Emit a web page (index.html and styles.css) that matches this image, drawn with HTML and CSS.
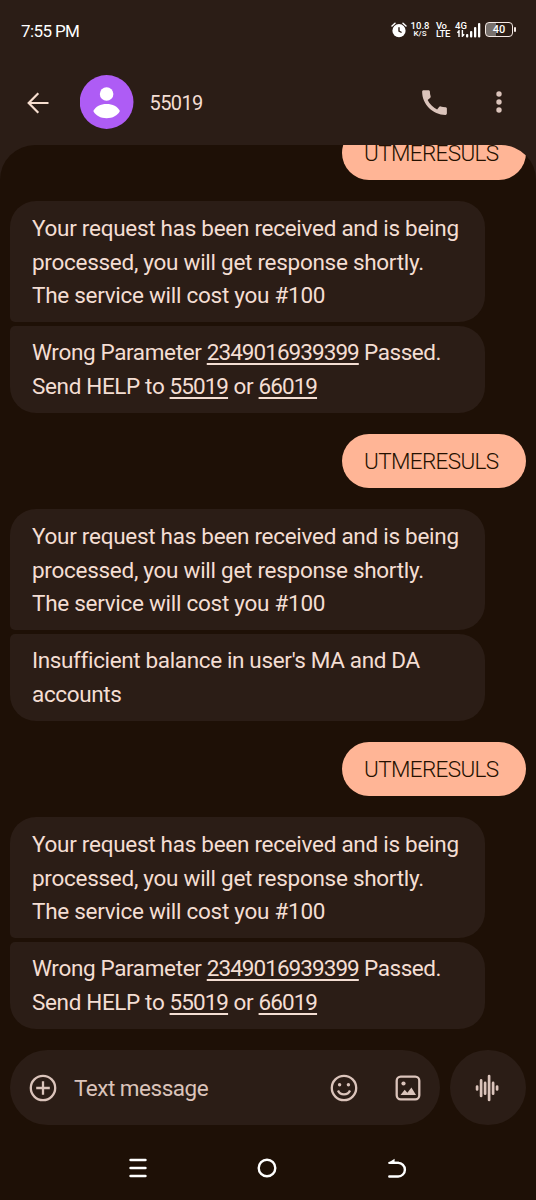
FILE: index.html
```html
<!DOCTYPE html>
<html lang="en">
<head>
<meta charset="utf-8">
<meta name="viewport" content="width=device-width">
<title>55019</title>
<link rel="stylesheet" href="styles.css">
</head>
<body>
<div class="phone">
  <div class="status">
    <span class="clock">7:55 PM</span>
    <div class="status-icons">
      <svg class="alarm" width="16" height="16" viewBox="0 0 16 16"><circle cx="8" cy="8.7" r="6.6" fill="#fff"/><path d="M1 4 4 1.3M15 4 12 1.3" stroke="#fff" stroke-width="1.5" stroke-linecap="round"/><path d="M8 5.2V9l2.6 1.5" fill="none" stroke="#2b1d16" stroke-width="1.4"/></svg>
      <div class="stack speed"><span>10.8</span><span class="unit">K/S</span></div>
      <div class="stack volte"><span>Vo</span><span>LTE</span></div>
      <div class="stack network"><span>4G</span><svg width="8" height="7" viewBox="0 0 8 7"><path d="M2 7V.8L.4 2.800M5.400 0v6.200l1.800-2" fill="none" stroke="#fff" stroke-width="1.400"/></svg></div>
      <svg class="signal" width="15" height="16" viewBox="0 0 15 16" fill="#fff"><rect x="0" y="12" width="2.300" height="3.500" rx="1"/><rect x="4" y="9" width="2.300" height="6.500" rx="1"/><rect x="8" y="5" width="2.300" height="10.500" rx="1"/><rect x="12" y="1" width="2.300" height="14.500" rx="1"/></svg>
      <div class="battery"><span>40</span></div><i class="battery-tip"></i>
    </div>
  </div>
  <header class="bar">
    <svg class="back" width="22" height="22" viewBox="0 0 22 22"><path d="M21.500 11H2M11.300 1.300 1.700 11l9.600 9.700" fill="none" stroke="#f7decf" stroke-width="2.200"/></svg>
    <svg class="avatar" width="54" height="54" viewBox="0 0 54 54"><circle cx="26.600" cy="27" r="26.900" fill="#ae5cf5"/><circle cx="26.600" cy="19" r="6.800" fill="#fff"/><path d="M13.300 36C15.600 31.500 20.600 29 26.600 29s11 2.500 13.300 7C37.600 40.600 32.600 43.200 26.600 43.200S15.600 40.600 13.300 36Z" fill="#fff"/></svg>
    <h1 class="name">55019</h1>
    <svg class="call" width="33" height="33" viewBox="0 0 24 24"><path d="M20.010 15.380c-1.230 0-2.420-.2-3.530-.56a.977.977 0 0 0-1.010.24l-1.570 1.970c-2.830-1.350-5.480-3.900-6.890-6.830l1.950-1.660c.27-.28.35-.67.24-1.020-.37-1.110-.56-2.300-.56-3.530 0-.54-.45-.99-.99-.99H4.190C3.650 3 3 3.240 3 3.990 3 13.280 10.730 21 20.010 21c.71 0 .99-.63.99-1.180v-3.450c0-.54-.45-.99-.99-.99z" fill="#dbc4bb"/></svg>
    <svg class="more" width="6" height="22" viewBox="0 0 6 22" fill="#dbc4bb"><circle cx="3" cy="3" r="2.700"/><circle cx="3" cy="11" r="2.700"/><circle cx="3" cy="19" r="2.700"/></svg>
  </header>
  <main class="thread">
    <p class="sent">UTMERESULS</p>
    <div class="group">
      <p class="received first">Your request has been received and is being<br>processed, you will get response shortly.<br>The service will cost you #100</p>
      <p class="received last"><span class="snug">Wrong Parameter </span><u>2349016939399</u> <span class="tight">Passed.</span><br><span class="snug">Send HELP to </span><u>55019</u> or <u>66019</u></p>
    </div>
    <p class="sent">UTMERESULS</p>
    <div class="group">
      <p class="received first">Your request has been received and is being<br>processed, you will get response shortly.<br>The service will cost you #100</p>
      <p class="received last snug">Insufficient balance in user's MA and DA<br>accounts</p>
    </div>
    <p class="sent">UTMERESULS</p>
    <div class="group">
      <p class="received first">Your request has been received and is being<br>processed, you will get response shortly.<br>The service will cost you #100</p>
      <p class="received last"><span class="snug">Wrong Parameter </span><u>2349016939399</u> <span class="tight">Passed.</span><br><span class="snug">Send HELP to </span><u>55019</u> or <u>66019</u></p>
    </div>
  </main>
  <div class="composer">
    <div class="field">
      <svg width="28" height="28" viewBox="0 0 28 28" fill="none" stroke="#dbc4bb" stroke-width="2.300"><circle cx="14" cy="14" r="12.200"/><path d="M14 7.200v13.600M7.200 14h13.600"/></svg>
      <span class="hint">Text message</span>
      <svg class="emoji" width="28" height="28" viewBox="0 0 28 28" fill="none" stroke="#dbc4bb" stroke-width="2.300"><circle cx="14" cy="14" r="12.200"/><circle cx="9.600" cy="10.800" r="1.700" fill="#dbc4bb" stroke="none"/><circle cx="18.400" cy="10.800" r="1.700" fill="#dbc4bb" stroke="none"/><path d="M8 16.500c1.100 2.500 3.300 3.900 6 3.900s4.900-1.400 6-3.900"/></svg>
      <svg width="26" height="26" viewBox="0 0 26 26"><rect x="1.700" y="1.700" width="22.600" height="22.600" rx="4" fill="none" stroke="#dbc4bb" stroke-width="2.300"/><circle cx="8.500" cy="8.500" r="2.100" fill="#dbc4bb"/><path d="m5.500 20 4.200-5.300 2.700 3.100 4-5.200 4.600 7.400Z" fill="#dbc4bb"/></svg>
    </div>
    <div class="voice"><svg width="24" height="28" viewBox="0 0 24 28" stroke="#dbc4bb" stroke-width="2.700" stroke-linecap="round"><path d="M2.100 12.500v3M6.100 6.400v15.600M10.100 8.900v10.800M14.100 2v24M18.100 8.900v10.800M22.100 12.500v3"/></svg></div>
  </div>
  <nav class="nav">
    <svg width="18" height="20" viewBox="0 0 18 20" stroke="#fff" stroke-width="2.600" stroke-linecap="round"><path d="M1.600 2h14.800M1.600 10h14.800M1.600 18h14.800"/></svg>
    <svg width="20" height="20" viewBox="0 0 20 20"><circle cx="10" cy="10" r="8.300" fill="none" stroke="#fff" stroke-width="2.400"/></svg>
    <svg width="20" height="20" viewBox="0 0 20 20"><path d="M1 5.100 7.600.7v3.100H12V5.500Z" fill="#fff"/><path d="M2.500 4.900h8.600a6.800 6.800 0 0 1 0 13.600H2.300" fill="none" stroke="#fff" stroke-width="2.400" stroke-linecap="round"/></svg>
  </nav>
</div>
</body>
</html>
```
FILE: styles.css
```css
* { box-sizing: border-box; }
body { margin: 0; background: #1e1006; font-family: Roboto, sans-serif; color: #f4ded3; }
svg { display: block; flex: none; }
h1, p { margin: 0; font-weight: 400; }
.phone { width: 536px; height: 1200px; display: flex; flex-direction: column; background: linear-gradient(#2b1d16 200px, #1e1006 200px); overflow: hidden; }
.status { height: 60px; flex: none; display: flex; align-items: center; justify-content: space-between; padding: 1px 20px 2px 21px; color: #fff; }
.clock { font-size: 17px; letter-spacing: -0.6px; padding-top: 2px; }
.status-icons { display: flex; align-items: center; height: 18px; }
.stack { display: flex; flex-direction: column; font-size: 9.5px; line-height: 8px; font-weight: 500; align-items: center; }
.speed { width: 18px; margin-left: 4px; }
.unit { font-size: 8px; }
.volte { width: 15px; margin-left: 7px; align-items: flex-start; letter-spacing: -0.4px; }
.network { width: 12px; margin-left: 4px; }
.signal { margin-left: -1px; }
.battery { width: 28px; height: 15px; margin-left: 4px; border: 1.500px solid #f4e9e4; border-radius: 4px; background: linear-gradient(90deg, #77706c 40%, transparent 40%); font-size: 11px; line-height: 13px; font-weight: 500; text-align: center; }
.battery-tip { width: 2px; height: 5px; margin-left: 1px; background: #f4e9e4; border-radius: 1px; }
.bar { height: 85px; flex: none; display: flex; align-items: center; padding: 0 34px 0 27px; }
.avatar { margin: 0 0 1px 30.5px; }
.name { flex: 1; margin-left: 16px; font-size: 20px; letter-spacing: -0.6px; }
.more { margin: 0 0 1px 43px; }
.call { margin: 0 2px 1px 0; }
.thread { height: 884px; flex: none; display: flex; flex-direction: column; justify-content: flex-end; gap: 21px; padding: 0 10px; background: #1e1006; border-radius: 35px 35px 0 0; overflow: hidden; font-size: 22.5px; line-height: 33.5px; letter-spacing: -0.28px; }
.sent { flex: none; align-self: flex-end; width: 184px; height: 54px; border-radius: 27px; background: #ffb596; color: #241000; padding: 10.500px 0 0 22px; white-space: nowrap; font-weight: 300; letter-spacing: -0.65px; }
.group { width: 475px; flex: none; display: flex; flex-direction: column; gap: 3.5px; white-space: nowrap; }
.received { background: #2b1d16; padding-left: 22px; }
.first { height: 121px; padding-top: 11px; border-radius: 26px 26px 26px 5px; }
.last { height: 87.5px; padding-top: 10.5px; border-radius: 5px 26px 26px 26px; }
.snug { letter-spacing: -0.36px; }
.tight { letter-spacing: -0.45px; }
u { letter-spacing: -0.95px; text-decoration-thickness: 1.5px; text-underline-offset: 3px; text-decoration-skip-ink: none; }
.composer { display: flex; gap: 10px; margin-top: 21px; padding: 0 10px; height: 75px; flex: none; }
.field { width: 430px; border-radius: 38px; background: #2b1d16; display: flex; align-items: center; padding: 0 19px; }
.hint { flex: 1; margin-left: 17px; font-size: 22.5px; letter-spacing: -0.5px; color: #dbc4bb; white-space: nowrap; }
.emoji { margin-right: 37px; }
.voice { width: 76px; border-radius: 38px; background: #2b1d16; display: grid; place-items: center; padding-right: 2px; }
.nav { flex: 1; display: flex; justify-content: space-between; align-items: center; padding: 10px 129px 0 129px; }
```
